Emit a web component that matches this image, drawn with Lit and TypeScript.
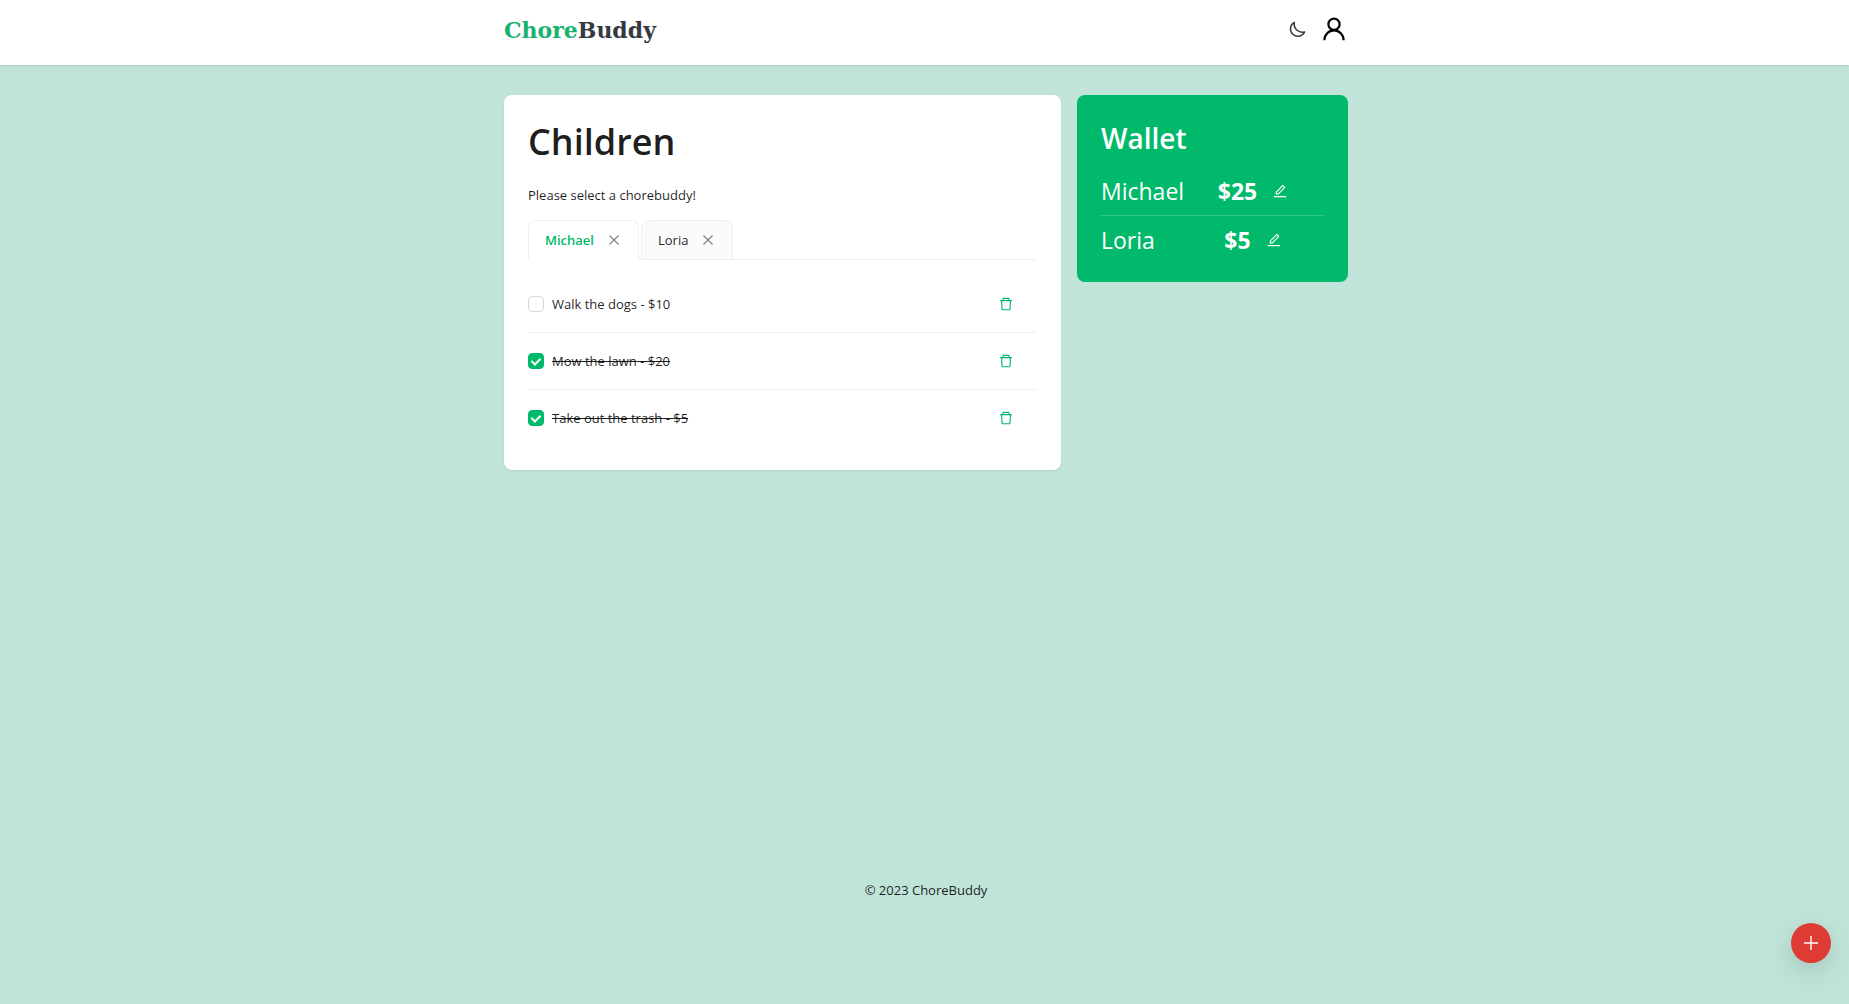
import { LitElement, html, css, svg } from "lit";
import { customElement, state } from "lit/decorators.js";
import { classMap } from "lit/directives/class-map.js";

const deletePath =
  "M360 184h-8c4.4 0 8-3.6 8-8v8h304v-8c0 4.4 3.6 8 8 8h-8v72h72v-80c0-35.3-28.7-64-64-64H352c-35.3 0-64 28.7-64 64v80h72v-72zm504 72H160c-17.7 0-32 14.3-32 32v32c0 4.4 3.6 8 8 8h60.4l24.7 523c1.6 34.1 29.8 61 63.9 61h454c34.2 0 62.3-26.8 63.9-61l24.7-523H888c4.4 0 8-3.6 8-8v-32c0-17.7-14.3-32-32-32zM731.3 840H292.7l-24.2-512h487l-24.2 512z";
const editPath =
  "M257.7 752c2 0 4-.2 6-.5L431.9 722c2-.4 3.9-1.3 5.3-2.8l423.9-423.9a9.96 9.96 0 000-14.1L694.9 114.9c-1.9-1.9-4.4-2.9-7.1-2.9s-5.2 1-7.1 2.9L256.8 538.8c-1.5 1.5-2.4 3.3-2.8 5.3l-29.5 168.2a33.5 33.5 0 009.4 29.8c6.6 6.4 14.9 9.9 23.8 9.9zm67.4-174.4L687.8 215l73.3 73.3-362.7 362.6-88.9 15.7 15.6-89zM880 836H144c-17.7 0-32 14.3-32 32v36c0 4.4 3.6 8 8 8h784c4.4 0 8-3.6 8-8v-36c0-17.7-14.3-32-32-32z";

const icon = (path: string) => html`
  <svg class="icon" viewBox="64 64 896 896" fill="currentColor" aria-hidden="true">
    ${svg`<path d=${path}></path>`}
  </svg>
`;

interface Chore {
  title: string;
  reward: number;
  done: boolean;
}

interface Child {
  name: string;
  balance: number;
  chores: Chore[];
}

@customElement("app-root")
export class AppRoot extends LitElement {
  @state() private selected = 0;

  @state() private kids: Child[] = [
    {
      name: "Michael",
      balance: 25,
      chores: [
        { title: "Walk the dogs", reward: 10, done: false },
        { title: "Mow the lawn", reward: 20, done: true },
        { title: "Take out the trash", reward: 5, done: true },
      ],
    },
    { name: "Loria", balance: 5, chores: [] },
  ];

  static styles = css`
    :host {
      display: flex;
      flex-direction: column;
      min-height: 100vh;
      box-sizing: border-box;
      background: #c0e4da;
      color: rgba(0, 0, 0, 0.88);
      font: 13px/22px "Open Sans", "Noto Sans", sans-serif;
    }
    * {
      box-sizing: border-box;
    }
    h1,
    h2,
    p,
    ul {
      margin: 0;
      padding: 0;
    }
    ul {
      list-style: none;
    }
    button {
      display: flex;
      align-items: center;
      justify-content: center;
      margin: 0;
      padding: 0;
      border: 0;
      background: none;
      color: inherit;
      font: inherit;
      cursor: pointer;
    }
    .icon {
      display: block;
      width: 14px;
      height: 14px;
    }
    .header {
      padding: 0 16px 0 19px;
      background: #fff;
      box-shadow: 0 1px 2px rgba(0, 0, 0, 0.08);
    }
    .bar {
      display: flex;
      align-items: center;
      justify-content: space-between;
      max-width: 844px;
      height: 65px;
      margin: 0 auto;
      padding-bottom: 7px;
    }
    .logo {
      padding-top: 2px;
      color: #343a40;
      font: bold 22px/32px "DejaVu Serif", serif;
      text-decoration: none;
    }
    .logo-accent {
      color: #17b26e;
    }
    .actions {
      display: flex;
      align-items: center;
      gap: 16px;
      padding-right: 2px;
    }
    .moon {
      width: 18px;
      height: 18px;
    }
    .user {
      width: 24px;
      height: 24px;
    }
    .main {
      flex: 1;
      padding: 30px 16px 0 19px;
    }
    .columns {
      display: grid;
      grid-template-columns: 557fr 271fr;
      align-items: start;
      gap: 16px;
      max-width: 844px;
      margin: 0 auto;
    }
    .card {
      padding: 24px;
      border-radius: 8px;
      background: #fff;
      box-shadow: 0 1px 2px rgba(0, 0, 0, 0.08);
    }
    .title {
      margin-bottom: 19px;
      font-size: 36px;
      line-height: 46px;
      font-weight: 600;
    }
    .hint {
      margin-bottom: 14px;
    }
    .tabs {
      display: flex;
      gap: 2px;
      height: 40px;
      margin-bottom: 16px;
      box-shadow: inset 0 -1px #f0f0f0;
    }
    .tab {
      display: flex;
      align-items: center;
      gap: 12px;
      padding: 0 16px;
      border: 1px solid #f0f0f0;
      border-radius: 8px 8px 0 0;
      background: #fafafa;
    }
    .tab.active {
      border-bottom-color: #fff;
      background: #fff;
      color: #00b96b;
      font-weight: 600;
    }
    .close {
      width: 16px;
      color: rgba(0, 0, 0, 0.5);
    }
    .close .icon {
      width: 10px;
      height: 10px;
    }
    .chore {
      display: flex;
      align-items: center;
      justify-content: space-between;
      height: 57px;
      padding-right: 24px;
      border-bottom: 1px solid #f0f0f0;
    }
    .chore:last-child {
      height: 56px;
      border-bottom: 0;
    }
    .label {
      display: flex;
      align-items: center;
      gap: 8px;
      cursor: pointer;
    }
    .check {
      appearance: none;
      display: grid;
      place-items: center;
      width: 16px;
      height: 16px;
      margin: 0;
      border: 1px solid #d9d9d9;
      border-radius: 4px;
      background: #fff;
    }
    .check:checked {
      border-color: #00b96b;
      background: #00b96b;
    }
    .check:checked::after {
      content: "";
      box-sizing: border-box;
      width: 6px;
      height: 9px;
      border: solid #fff;
      border-width: 0 2px 2px 0;
      transform: translateY(-1px) rotate(45deg);
    }
    .done {
      text-decoration: line-through;
    }
    .delete {
      color: #00b96b;
    }
    .wallet {
      padding-bottom: 18px;
      background: #00b96b;
      color: #fff;
      box-shadow: none;
    }
    .wallet-title {
      margin-bottom: 10px;
      font-size: 28px;
      line-height: 38px;
      font-weight: 600;
    }
    .account {
      display: grid;
      grid-template-columns: 80px 1fr;
      align-items: center;
      height: 48px;
      font-size: 23px;
      line-height: 32px;
      white-space: nowrap;
    }
    .account + .account {
      height: 49px;
      border-top: 1px solid rgba(255, 255, 255, 0.2);
    }
    .balance {
      display: flex;
      align-items: center;
      justify-content: center;
      gap: 16px;
    }
    .amount {
      font-weight: 700;
    }
    .footer {
      padding: 24px 16px 103px 19px;
      text-align: center;
    }
    .fab {
      position: fixed;
      right: 18px;
      bottom: 41px;
      width: 40px;
      height: 40px;
      border-radius: 50%;
      background: #dd3c35;
      color: #fff;
      box-shadow: 0 6px 16px rgba(0, 0, 0, 0.08), 0 9px 28px 8px rgba(0, 0, 0, 0.05);
    }
  `;

  private toggle(chore: Chore) {
    chore.done = !chore.done;
    this.requestUpdate();
  }

  private removeChore(child: Child, chore: Chore) {
    child.chores = child.chores.filter((c) => c !== chore);
    this.requestUpdate();
  }

  private removeKid(child: Child) {
    this.kids = this.kids.filter((c) => c !== child);
    this.selected = 0;
  }

  private renderChore(child: Child, chore: Chore) {
    return html`
      <li class="chore">
        <label class="label">
          <input class="check" type="checkbox" .checked=${chore.done} @change=${() => this.toggle(chore)} />
          <span class=${classMap({ done: chore.done })}>${chore.title} - $${chore.reward}</span>
        </label>
        <button class="delete" aria-label="Delete" @click=${() => this.removeChore(child, chore)}>
          ${icon(deletePath)}
        </button>
      </li>
    `;
  }

  render() {
    const current = this.kids[this.selected];
    return html`
      <header class="header">
        <div class="bar">
          <a class="logo" href="#"><span class="logo-accent">Chore</span>Buddy</a>
          <div class="actions">
            <button aria-label="Dark mode">
              <svg class="moon" viewBox="0 0 18 18" fill="none" stroke="#343a40" stroke-width="1.5" stroke-linejoin="round">
                <path d="M6.4 2.4A7.4 7.4 0 1 0 16.6 12 A8.2 8.2 0 0 1 6.4 2.4z"></path>
              </svg>
            </button>
            <button aria-label="Account">
              <svg class="user" viewBox="0 0 24 24" fill="none" stroke="#000" stroke-width="2.2">
                <circle cx="12" cy="7.2" r="5.6"></circle>
                <path d="M2.4 23.2a9.6 9.8 0 0 1 19.2 0"></path>
              </svg>
            </button>
          </div>
        </div>
      </header>

      <main class="main">
        <div class="columns">
          <section class="card">
            <h1 class="title">Children</h1>
            <p class="hint">Please select a chorebuddy!</p>
            <div class="tabs">
              ${this.kids.map(
                (child, i) => html`
                  <div class=${classMap({ tab: true, active: i === this.selected })}>
                    <button @click=${() => (this.selected = i)}>${child.name}</button>
                    <button class="close" aria-label="Remove" @click=${() => this.removeKid(child)}>
                      <svg class="icon" viewBox="0 0 10 10" stroke="currentColor" stroke-width="1.1" aria-hidden="true">
                        <path d="M.5.5l9 9M9.5.5l-9 9"></path>
                      </svg>
                    </button>
                  </div>
                `
              )}
            </div>
            <ul>
              ${current?.chores.map((chore) => this.renderChore(current, chore))}
            </ul>
          </section>

          <section class="card wallet">
            <h2 class="wallet-title">Wallet</h2>
            <ul>
              ${this.kids.map(
                (child) => html`
                  <li class="account">
                    <span>${child.name}</span>
                    <span class="balance">
                      <span class="amount">$${child.balance}</span>
                      <button aria-label="Edit">${icon(editPath)}</button>
                    </span>
                  </li>
                `
              )}
            </ul>
          </section>
        </div>
      </main>

      <footer class="footer">© 2023 ChoreBuddy</footer>

      <button class="fab" aria-label="Add">
        <svg class="icon" viewBox="0 0 14 14" stroke="currentColor" stroke-width="1.4" fill="none">
          <path d="M7 0v14M0 7h14"></path>
        </svg>
      </button>
    `;
  }
}
